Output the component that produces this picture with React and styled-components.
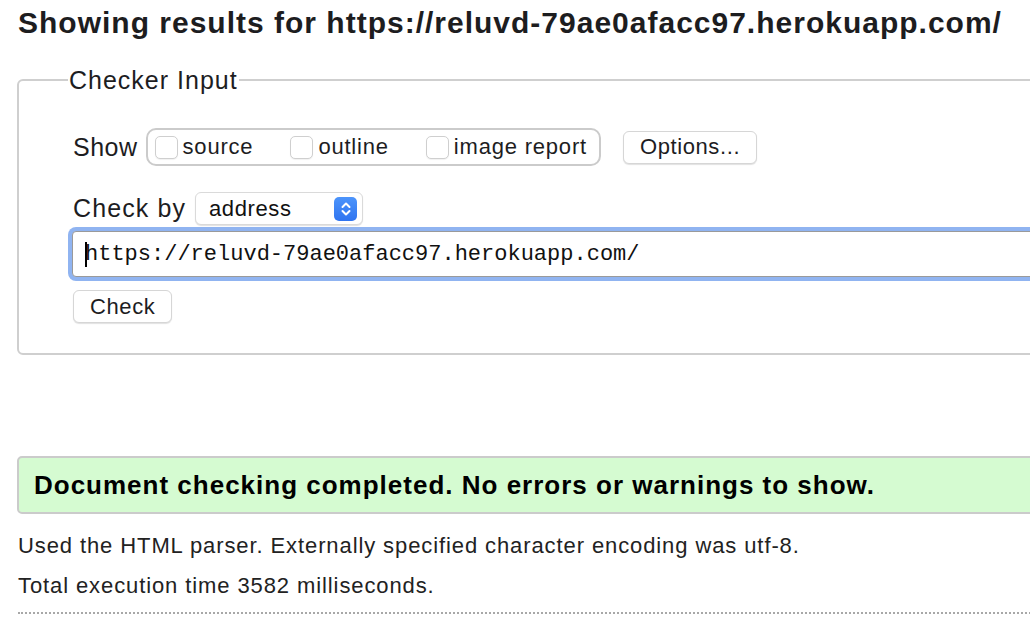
import React from 'react';
import styled, { createGlobalStyle } from 'styled-components';

const GlobalStyle = createGlobalStyle`
  html, body {
    margin: 0;
    padding: 0;
    background: #fff;
    overflow: hidden;
  }
  body {
    font-family: "Liberation Sans", Arial, Helvetica, sans-serif;
    color: #222;
  }
`;

const Page = styled.div`
  width: 1300px;
  padding: 5px 0 0 18px;
`;

const Heading = styled.h2`
  margin: 0;
  font-size: 30px;
  font-weight: bold;
  letter-spacing: 1px;
  line-height: 36px;
  color: #1d1d1f;
`;

const Fieldset = styled.fieldset`
  margin: 25px 0 0 -1px;
  padding: 0 0 30px 54px;
  width: 1200px;
  border: 2px solid #cfcfcf;
  border-radius: 6px;
  display: flex;
  flex-direction: column;
`;

const Legend = styled.legend`
  margin-left: -5px;
  padding: 0 1px;
  font-size: 25px;
  letter-spacing: 1px;
  line-height: 28px;
  color: #1d1d1f;
`;

const Row = styled.div`
  display: flex;
  align-items: center;
  margin-top: ${p => p.$top || 0}px;
`;

const Label = styled.span`
  font-size: 25px;
  letter-spacing: ${p => p.$ls || 0.5}px;
  color: #1d1d1f;
  margin-right: ${p => p.$gap || 8}px;
`;

const CheckGroup = styled.div`
  display: flex;
  align-items: center;
  height: 34px;
  padding: 0 12px 0 7px;
  border: 2px solid #cbcbcb;
  border-radius: 10px;
  gap: 37px;
`;

const CheckItem = styled.label`
  display: flex;
  align-items: center;
  font-size: 22px;
  letter-spacing: 0.8px;
  color: #1d1d1f;
`;

const Box = styled.input.attrs({ type: 'checkbox' })`
  appearance: none;
  margin: 0 5px 0 0;
  width: 23px;
  height: 23px;
  border: 1px solid #cfcfcf;
  border-radius: 5px;
  background: #fff;
  box-shadow: 0 1px 1px rgba(0, 0, 0, 0.06);
`;

const Button = styled.button`
  font-family: "Liberation Sans", Arial, Helvetica, sans-serif;
  font-size: 22px;
  letter-spacing: 0.6px;
  color: #1d1d1f;
  background: #fff;
  border: 1px solid #d6d6d6;
  border-radius: 6px;
  box-shadow: 0 1px 1px rgba(0, 0, 0, 0.12);
  height: ${p => p.$h || 33}px;
  padding: 0 ${p => p.$px || 16}px;
  margin-left: ${p => p.$ml || 0}px;
`;

const Select = styled.div`
  display: flex;
  align-items: center;
  justify-content: space-between;
  width: 168px;
  height: 33px;
  box-sizing: border-box;
  padding: 0 5px 0 13px;
  border: 1px solid #dadada;
  border-radius: 6px;
  background: #fff;
  box-shadow: 0 1px 1px rgba(0, 0, 0, 0.12);
  font-size: 22px;
  letter-spacing: 0.6px;
  color: #111;
`;

const Stepper = styled.span`
  display: flex;
  align-items: center;
  justify-content: center;
  width: 23px;
  height: 24px;
  border-radius: 5px;
  background: linear-gradient(#4c94fb, #2f74f0);
`;

const InputWrap = styled.div`
  position: relative;
  margin: 6px 0 0 -1px;
`;

const UrlInput = styled.input`
  display: block;
  width: 1100px;
  height: 46px;
  box-sizing: border-box;
  padding: 0 12px;
  border: 1px solid #9a9a9a;
  border-radius: 4px;
  box-shadow: 0 0 0 4px #90b4f1;
  outline: none;
  font-family: "Liberation Mono", "Courier New", monospace;
  font-size: 22px;
  color: #111;
  background: #fff;
`;

const Caret = styled.span`
  position: absolute;
  left: 13px;
  top: 11px;
  width: 2px;
  height: 25px;
  background: #000;
`;

const Success = styled.div`
  margin: 101px 0 0 -1px;
  width: 1200px;
  height: 54px;
  display: flex;
  align-items: center;
  padding-left: 15px;
  border: 2px solid #cbcbcb;
  border-radius: 5px;
  background: #d5fbd1;
  font-size: 26px;
  letter-spacing: 1px;
  font-weight: bold;
  color: #000;
`;

const Info = styled.p`
  margin: 0;
  font-size: 22px;
  letter-spacing: 0.9px;
  line-height: 40px;
  color: #222;
`;

const InfoList = styled.div`
  margin-top: 12px;
  padding-bottom: 6px;
  border-bottom: 2px dotted #a8a8a8;
  width: 1200px;
`;

const StepIcon = () => (
  <svg width="12" height="16" viewBox="0 0 12 16" fill="none" stroke="#fff" strokeWidth="2" strokeLinecap="round" strokeLinejoin="round">
    <polyline points="2.5 6 6 2.5 9.5 6" />
    <polyline points="2.5 10 6 13.5 9.5 10" />
  </svg>
);

export default function App() {
  return (
    <>
      <GlobalStyle />
      <Page>
        <Heading>Showing results for https://reluvd-79ae0afacc97.herokuapp.com/</Heading>

        <Fieldset>
          <Legend>Checker Input</Legend>

          <Row $top={34}>
            <Label $gap={8}>Show</Label>
            <CheckGroup>
              <CheckItem><Box />source</CheckItem>
              <CheckItem><Box />outline</CheckItem>
              <CheckItem><Box />image report</CheckItem>
            </CheckGroup>
            <Button $ml={22} $px={16}>Options...</Button>
          </Row>

          <Row $top={26}>
            <Label $gap={9} $ls={1.1}>Check by</Label>
            <Select>
              address
              <Stepper><StepIcon /></Stepper>
            </Select>
          </Row>

          <InputWrap>
            <UrlInput defaultValue="https://reluvd-79ae0afacc97.herokuapp.com/" />
            <Caret />
          </InputWrap>

          <Row $top={13}>
            <Button $px={16} $h={33}>Check</Button>
          </Row>
        </Fieldset>

        <Success>Document checking completed. No errors or warnings to show.</Success>

        <InfoList>
          <Info>Used the HTML parser. Externally specified character encoding was utf-8.</Info>
          <Info>Total execution time 3582 milliseconds.</Info>
        </InfoList>
      </Page>
    </>
  );
}
